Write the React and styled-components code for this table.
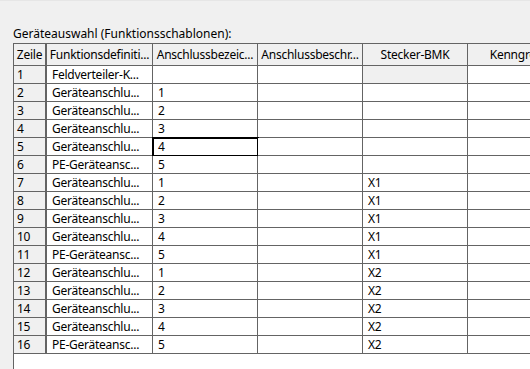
import React from "react";
import styled, { createGlobalStyle } from "styled-components";

const Global = createGlobalStyle`
  html, body { margin: 0; padding: 0; }
  body {
    background: #f0f0f0;
    overflow: hidden;
    font-family: "Noto Sans", "Open Sans", sans-serif;
    font-size: 12px;
    color: #000;
  }
`;

const Page = styled.div`
  width: 530px;
  height: 369px;
  overflow: hidden;
  display: flex;
  flex-direction: column;
  background: #f0f0f0;
`;

const TopBand = styled.div`
  height: 2px;
  background: #f7f7f7;
  border-bottom: 1px solid #e6e6e6;
`;

const Content = styled.div`
  display: flex;
  flex-direction: column;
  padding: 25px 0 0 13px;
`;

const Label = styled.div`
  height: 17px;
  line-height: 16px;
  white-space: nowrap;
`;

const Grid = styled.div`
  display: grid;
  grid-template-columns: 33px 106px 105px 105px 105px 105px 105px;
  grid-auto-rows: 18px;
  grid-template-rows: 22px;
  width: 700px;
  height: 340px;
  align-content: start;
  background: #fff;
  border-left: 1px solid #646464;
  border-top: 1px solid #646464;
  letter-spacing: -0.25px;
`;

const Head = styled.div`
  box-sizing: border-box;
  background: #f0f0f0;
  border-right: ${(p) => (p.$first ? "2px" : "1px")} solid #646464;
  border-bottom: 1px solid #646464;
  display: flex;
  align-items: center;
  justify-content: center;
  white-space: nowrap;
  overflow: hidden;
  padding: 0 2px 1px;
`;

const RowHead = styled.div`
  box-sizing: border-box;
  background: #f0f0f0;
  border-right: 2px solid #646464;
  border-bottom: 1px solid #646464;
  display: flex;
  align-items: center;
  padding: 0 0 1px 3px;
  white-space: nowrap;
`;

const Cell = styled.div`
  box-sizing: border-box;
  background: ${(p) => (p.$disabled ? "#f0f0f0" : "#fff")};
  border-right: 1px solid #646464;
  border-bottom: 1px solid #646464;
  display: flex;
  align-items: center;
  padding: 0 0 1px 5px;
  white-space: nowrap;
  overflow: hidden;
  outline: ${(p) => (p.$selected ? "2px solid #000" : "none")};
  outline-offset: -1px;
`;

const headers = [
  "Zeile",
  "Funktionsdefiniti...",
  "Anschlussbezeic...",
  "Anschlussbeschr...",
  "Stecker-BMK",
  "Kenngröße",
  "",
];

const rows = [
  ["Feldverteiler-K...", "", ""],
  ["Geräteanschlu...", "1", ""],
  ["Geräteanschlu...", "2", ""],
  ["Geräteanschlu...", "3", ""],
  ["Geräteanschlu...", "4", ""],
  ["PE-Geräteansc...", "5", ""],
  ["Geräteanschlu...", "1", "X1"],
  ["Geräteanschlu...", "2", "X1"],
  ["Geräteanschlu...", "3", "X1"],
  ["Geräteanschlu...", "4", "X1"],
  ["PE-Geräteansc...", "5", "X1"],
  ["Geräteanschlu...", "1", "X2"],
  ["Geräteanschlu...", "2", "X2"],
  ["Geräteanschlu...", "3", "X2"],
  ["Geräteanschlu...", "4", "X2"],
  ["PE-Geräteansc...", "5", "X2"],
];

export default function App() {
  return (
    <Page>
      <Global />
      <TopBand />
      <Content>
        <Label>Geräteauswahl (Funktionsschablonen):</Label>
        <Grid>
          {headers.map((h, i) => (
            <Head key={i} $first={i === 0}>
              {h}
            </Head>
          ))}
          {rows.map((r, i) => (
            <React.Fragment key={i}>
              <RowHead>{i + 1}</RowHead>
              <Cell>{r[0]}</Cell>
              <Cell $selected={i === 4}>{r[1]}</Cell>
              <Cell />
              <Cell $disabled={i === 0}>{r[2]}</Cell>
              <Cell />
              <Cell />
            </React.Fragment>
          ))}
        </Grid>
      </Content>
    </Page>
  );
}
